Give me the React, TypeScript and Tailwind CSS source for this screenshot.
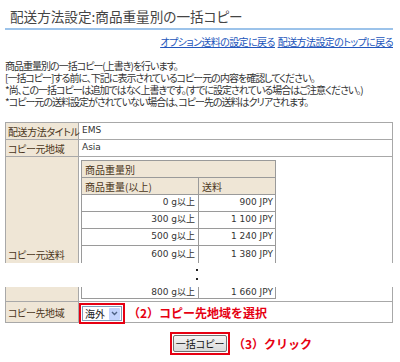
const jp = '"Noto Sans CJK JP", sans-serif'
const lat = '"DejaVu Sans", "Noto Sans CJK JP", sans-serif'

const rows = [
  { w: '0 g以上', p: '900 JPY' },
  { w: '300 g以上', p: '1 100 JPY' },
  { w: '500 g以上', p: '1 240 JPY' },
  { w: '600 g以上', p: '1 380 JPY' },
]

function Label({ children, className = '' }: { children?: React.ReactNode; className?: string }) {
  return (
    <div
      className={`flex w-[73px] shrink-0 items-center whitespace-nowrap border-r border-[#a8a8a8] bg-[#efe6d6] pl-[2px] text-[10px] tracking-[-0.4px] text-[#4b3621] ${className}`}
      style={{ fontFamily: jp }}
    >
      {children}
    </div>
  )
}

function WeightRow({ w, p, last }: { w: string; p: string; last?: boolean }) {
  return (
    <div className={`flex h-[17px] ${last ? '' : 'border-b border-[#9a9a9a]'}`}>
      <div className="flex w-[117px] items-center justify-end border-r border-[#9a9a9a] pr-[3px]">{w}</div>
      <div className="flex flex-1 items-center justify-end pr-[2px]">{p}</div>
    </div>
  )
}

export default function App() {
  return (
    <div className="h-[362px] w-[400px] overflow-hidden bg-white text-[#333]" style={{ fontFamily: jp, fontFeatureSettings: '"palt"' }}>
      <div className="ml-[5px] w-[388px]">
        <h1 className="border-b-2 border-[#9cc3ea] pb-[3px] pl-[5px] pt-[7px] text-[13.6px] leading-[18px] font-normal text-[#444]">
          配送方法設定:商品重量別の一括コピー
        </h1>

        <div className="mt-[6px] flex justify-end gap-[3px] whitespace-nowrap text-[10px] leading-[12px] tracking-[-0.6px] text-[#2255bb] underline">
          <a href="#">オプション送料の設定に戻る</a>
          <a href="#">配送方法設定のトップに戻る</a>
        </div>

        <div className="mt-[12px] whitespace-nowrap text-[10px] leading-[12px] tracking-[-1px]">
          <p>商品重量別の一括コピー(上書き)を行います。</p>
          <p>[一括コピー]する前に、下記に表示されているコピー元の内容を確認してください。</p>
          <p>*尚、この一括コピーは追加ではなく上書きです。(すでに設定されている場合はご注意ください。)</p>
          <p>*コピー元の送料設定がされていない場合は、コピー先の送料はクリアされます。</p>
        </div>

        {/* table, upper part */}
        <div className="mt-[14px] border-x border-t border-[#a8a8a8] text-[9px]" style={{ fontFamily: lat }}>
          <div className="flex h-[17px] border-b border-[#a8a8a8]">
            <Label>配送方法タイトル</Label>
            <div className="flex items-center pl-[3px]">EMS</div>
          </div>
          <div className="flex h-[17px] border-b border-[#a8a8a8]">
            <Label>コピー元地域</Label>
            <div className="flex items-center pl-[3px]">Asia</div>
          </div>
          <div className="flex h-[106px]">
            <Label className="items-end pb-[1px]">コピー元送料</Label>
            <div className="pl-[2px] pt-[3px]">
              <div className="w-[195px] border-x border-t border-[#9a9a9a]">
                <div className="flex h-[17px] items-center border-b border-[#9a9a9a] bg-[#efe6d6] pl-[3px] text-[10px] text-[#4b3621]" style={{ fontFamily: jp }}>
                  商品重量別
                </div>
                <div className="flex h-[17px] border-b border-[#9a9a9a] bg-[#efe6d6] text-[10px] text-[#4b3621]" style={{ fontFamily: jp }}>
                  <div className="flex w-[117px] items-center border-r border-[#9a9a9a] pl-[3px]">商品重量(以上)</div>
                  <div className="flex items-center pl-[3px]">送料</div>
                </div>
                {rows.map((r, i) => (
                  <WeightRow key={r.w} w={r.w} p={r.p} last={i === rows.length - 1} />
                ))}
              </div>
            </div>
          </div>
        </div>

        {/* cut */}
        <div className="flex h-[24px] flex-col items-center pr-[4px] pt-[6px]">
          <div className="h-[2px] w-[2px] bg-[#222]" />
          <div className="mt-[7px] h-[2px] w-[2px] bg-[#222]" />
        </div>

        {/* table, lower part */}
        <div className="border-x border-b border-[#a8a8a8] text-[9px]" style={{ fontFamily: lat }}>
          <div className="flex h-[15px] border-b border-[#a8a8a8]">
            <Label />
            <div className="pl-[2px]">
              <div className="w-[195px] border-x border-b border-[#9a9a9a]">
                <div className="flex h-[11px]">
                  <div className="flex w-[117px] items-end justify-end border-r border-[#9a9a9a] pr-[3px] leading-[11px]">800 g以上</div>
                  <div className="flex flex-1 items-end justify-end pr-[2px] leading-[11px]">1 660 JPY</div>
                </div>
              </div>
            </div>
          </div>
          <div className="flex h-[20px]">
            <Label>コピー先地域</Label>
            <div className="flex items-start pt-[1px]" style={{ fontFamily: jp }}>
              <div className="h-[21px] w-[46px] border-2 border-[#e60012] p-[1px]">
                <div className="flex h-[15px] items-center border border-[#7f9db9] bg-white pl-[2px] text-[10px] text-[#222]">
                  <span className="flex-1">海外</span>
                  <span className="mr-[1px] flex h-[12px] w-[11px] items-center justify-center rounded-[1px] bg-[#c3d3fd]">
                    <svg width="7" height="5" viewBox="0 0 7 5">
                      <path d="M1 1l2.5 2.5L6 1" fill="none" stroke="#4d6185" strokeWidth="1.4" />
                    </svg>
                  </span>
                </div>
              </div>
              <span className="ml-[3px] mt-[2px] text-[12px] font-bold leading-[16px] text-[#e60012]" style={{ fontFeatureSettings: 'normal' }}>
                （2）コピー先地域を選択
              </span>
            </div>
          </div>
        </div>

        {/* button */}
        <div className="mt-[9px] flex items-center pl-[165px]">
          <div className="h-[23px] w-[60px] border-2 border-[#e60012] p-[1px]">
            <button className="flex h-[17px] w-full items-center justify-center rounded-[2px] border border-[#707070] bg-gradient-to-b from-[#f6f6f6] to-[#d9d9d9] text-[10px] text-[#111]">
              一括コピー
            </button>
          </div>
          <span className="ml-[3px] text-[12px] font-bold text-[#e60012]" style={{ fontFeatureSettings: 'normal' }}>
            （3）クリック
          </span>
        </div>
      </div>
    </div>
  )
}
